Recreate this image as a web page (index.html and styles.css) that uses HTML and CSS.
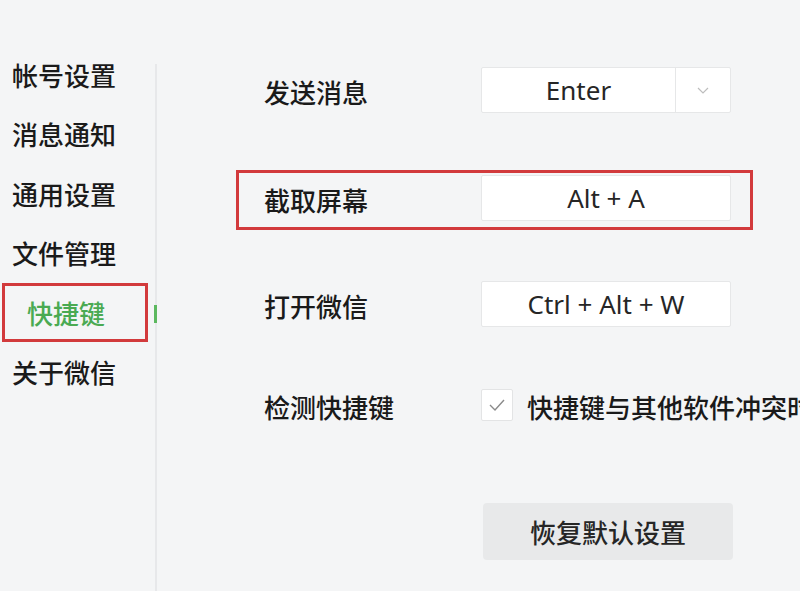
FILE: index.html
```html
<!DOCTYPE html>
<html lang="zh-CN">
<head>
<meta charset="utf-8">
<title>快捷键设置</title>
<link rel="stylesheet" href="styles.css">
</head>
<body>
<div class="window">
  <nav class="sidebar">
    <div class="nav-item">帐号设置</div>
    <div class="nav-item">消息通知</div>
    <div class="nav-item">通用设置</div>
    <div class="nav-item">文件管理</div>
    <div class="nav-item active">快捷键<span class="annot annot-nav"></span><span class="mark"></span></div>
    <div class="nav-item">关于微信</div>
  </nav>
  <div class="divider"></div>
  <main class="content">
    <div class="row row-send">
      <span class="label">发送消息</span>
      <div class="field select">
        <span class="value">Enter</span>
        <span class="arrow"><svg width="12" height="7" viewBox="0 0 12 7"><polyline points="1,1 6,6 11,1" fill="none" stroke="#bdbdbd" stroke-width="1.2"/></svg></span>
      </div>
    </div>
    <div class="row row-shot">
      <span class="annot annot-row"></span>
      <span class="label">截取屏幕</span>
      <div class="field"><span class="value">Alt + A</span></div>
    </div>
    <div class="row row-open">
      <span class="label">打开微信</span>
      <div class="field"><span class="value">Ctrl + Alt + W</span></div>
    </div>
    <div class="row row-check">
      <span class="label">检测快捷键</span>
      <span class="checkbox"><svg width="20" height="16" viewBox="0 0 20 16"><polyline points="3,8 8,13 17,3" fill="none" stroke="#8a8a8a" stroke-width="1.4"/></svg></span>
      <span class="check-text">快捷键与其他软件冲突时</span>
    </div>
    <div class="row row-reset">
      <button class="reset">恢复默认设置</button>
    </div>
  </main>
</div>
</body>
</html>
```
FILE: styles.css
```css
html, body {
  margin: 0;
  padding: 0;
}
body {
  width: 800px;
  height: 591px;
  overflow: hidden;
  background: #f4f5f6;
  font-family: "Noto Sans", "Noto Sans CJK SC", sans-serif;
  color: #1a1a1a;
}
.window {
  display: flex;
  height: 591px;
}
.sidebar {
  width: 155px;
  flex: none;
  padding-top: 46px;
  box-sizing: border-box;
}
.nav-item {
  position: relative;
  height: 59.5px;
  display: flex;
  align-items: center;
  padding-left: 12px;
  font-size: 26px;
  font-weight: 500;
  line-height: 30px;
  white-space: nowrap;
}
.nav-item.active {
  padding-left: 27px;
  color: #4aaa52;
}
.annot {
  position: absolute;
  border: 3px solid #d23a3c;
  box-sizing: border-box;
  pointer-events: none;
}
.annot-nav {
  left: 2px;
  top: -1px;
  width: 146px;
  height: 59px;
}
.mark {
  position: absolute;
  left: 154px;
  top: 21px;
  width: 3px;
  height: 18px;
  background: #5cb85f;
}
.divider {
  flex: none;
  width: 2px;
  margin-top: 64px;
  background: #e7e8ea;
}
.content {
  flex: 1;
  padding-top: 67px;
  padding-left: 107px;
  min-width: 0;
}
.row {
  position: relative;
  display: flex;
  align-items: center;
  height: 46px;
  white-space: nowrap;
}
.row-shot { margin-top: 62px; }
.row-open { margin-top: 60px; }
.row-check { margin-top: 55px; }
.row-reset {
  margin-top: 75px;
  height: 57px;
  padding-left: 219px;
}
.label {
  width: 217px;
  flex: none;
  font-size: 26px;
  font-weight: 500;
  line-height: 30px;
  padding-top: 5px;
}
.annot-row {
  left: -28px;
  top: -5px;
  width: 517px;
  height: 60px;
}
.field {
  width: 250px;
  height: 46px;
  box-sizing: border-box;
  background: #ffffff;
  border: 1px solid #e6e7e8;
  border-radius: 2px;
  display: flex;
  align-items: center;
  justify-content: center;
  font-size: 26px;
  color: #262626;
}
.select {
  justify-content: flex-start;
}
.select .value {
  width: 193px;
  text-align: center;
}
.arrow {
  flex: 1;
  height: 100%;
  border-left: 1px solid #e6e7e8;
  display: flex;
  align-items: center;
  justify-content: center;
}
.checkbox {
  width: 32px;
  height: 32px;
  flex: none;
  box-sizing: border-box;
  background: #ffffff;
  border: 1px solid #e3e4e5;
  border-radius: 2px;
  display: flex;
  align-items: center;
  justify-content: center;
}
.check-text {
  margin-left: 14px;
  font-size: 26px;
  font-weight: 500;
  line-height: 30px;
  padding-top: 5px;
}
.reset {
  width: 250px;
  height: 57px;
  border: none;
  border-radius: 4px;
  background: #e8e9ea;
  font-family: "Noto Sans", "Noto Sans CJK SC", sans-serif;
  font-size: 26px;
  font-weight: 500;
  color: #262626;
  padding: 0;
}
```
